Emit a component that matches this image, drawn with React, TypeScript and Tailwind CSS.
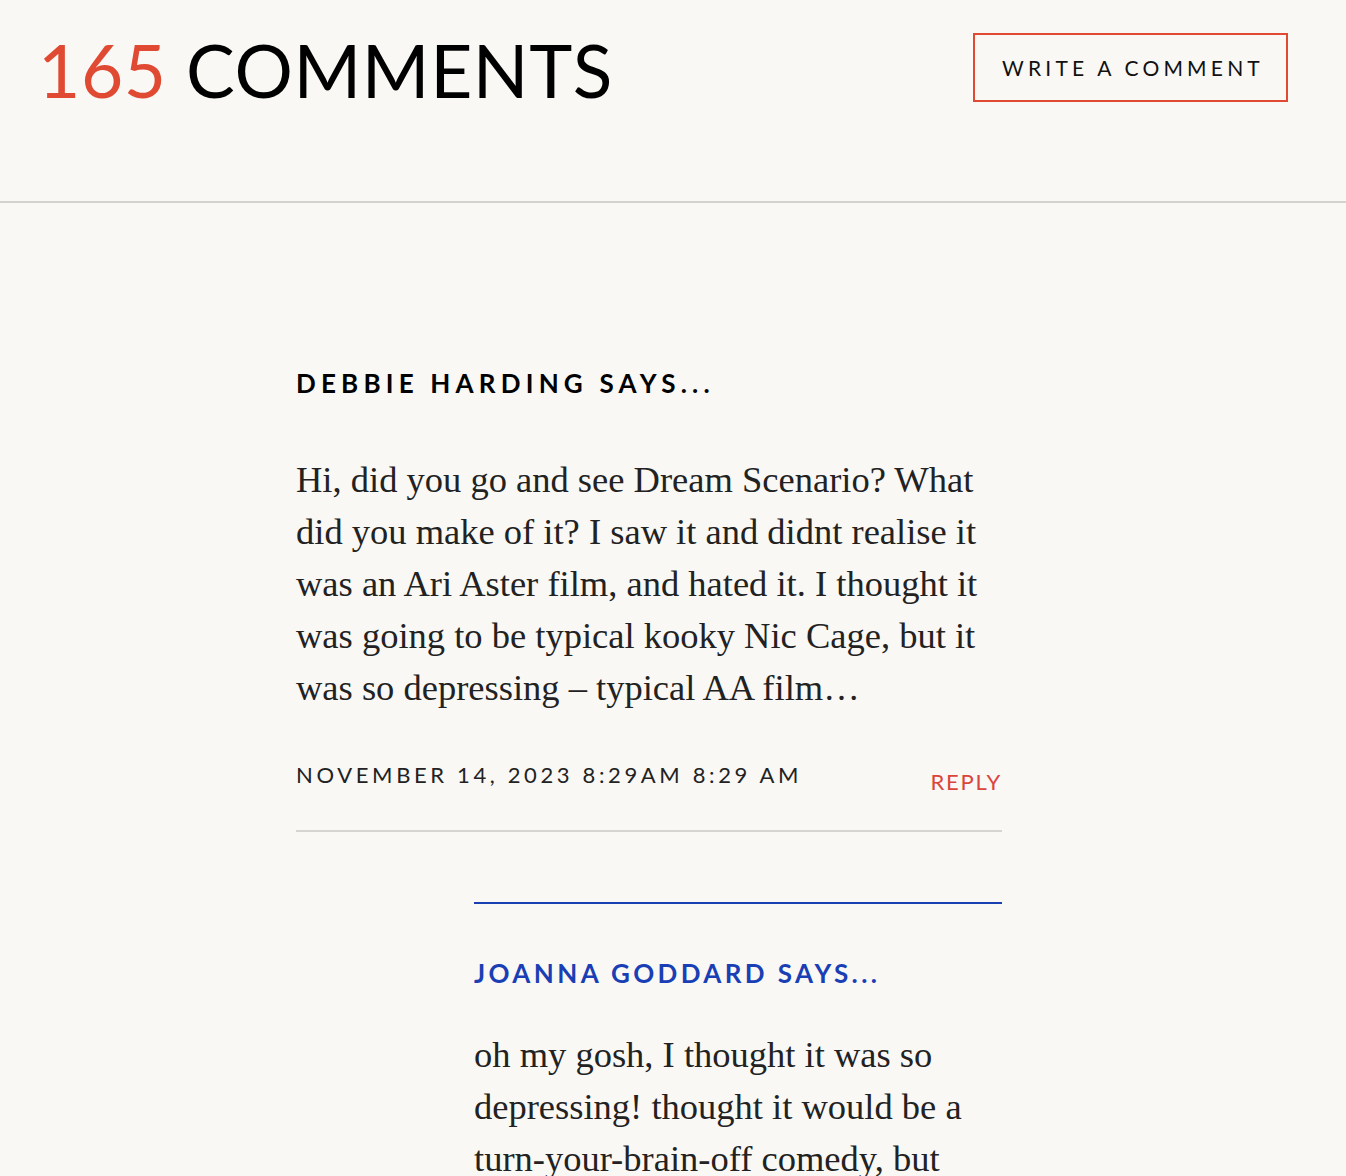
import React from "react";

export default function App() {
  return (
    <div className="min-h-screen bg-[#f9f8f5] text-[#1a1a1a]">
      <header className="h-[203px] border-b-2 border-[#d3d2cf] flex justify-between items-start">
        <h1 className="ml-[38px] mt-[28px] text-[73px] leading-[84px] font-normal tracking-[0.008em] text-black font-['Lato','Noto_Sans',sans-serif]">
          <span className="text-[#e04a33]">165</span> COMMENTS
        </h1>
        <button className="mt-[33px] mr-[58px] w-[315px] h-[69px] border-2 border-[#e04a33] text-[21px] tracking-[0.2em] text-[#111] flex items-center justify-center pl-[5px] font-['Lato','Noto_Sans',sans-serif]">
          WRITE A COMMENT
        </button>
      </header>

      <main className="ml-[296px] w-[706px] pt-[164px]">
        <article>
          <h3 className="text-[26px] leading-[32px] font-bold tracking-[0.2em] text-black font-['Lato','Noto_Sans',sans-serif]">
            DEBBIE HARDING SAYS...
          </h3>
          <p className="mt-[55px] text-[36.5px] leading-[52px] text-[#222] font-['Liberation_Serif','Times_New_Roman',serif]">
            Hi, did you go and see Dream Scenario? What
            <br />
            did you make of it? I saw it and didnt realise it
            <br />
            was an Ari Aster film, and hated it. I thought it
            <br />
            was going to be typical kooky Nic Cage, but it
            <br />
            was so depressing – typical AA film…
          </p>
          <div className="mt-[47px] flex justify-between items-start pb-[34px] border-b-2 border-[#d6d5d2]">
            <span className="text-[22px] leading-[28px] tracking-[0.165em] text-[#222] font-['Lato','Noto_Sans',sans-serif]">
              NOVEMBER 14, 2023 8:29AM 8:29 AM
            </span>
            <a className="mt-[7px] text-[22px] leading-[28px] tracking-[0.08em] text-[#d9453c] font-['Lato','Noto_Sans',sans-serif]">
              REPLY
            </a>
          </div>
        </article>

        <article className="ml-[178px] mt-[70px] border-t-2 border-[#1a3fb0] pt-[53px]">
          <h3 className="text-[26px] leading-[32px] font-bold tracking-[0.13em] text-[#1a3fb5] font-['Lato','Noto_Sans',sans-serif]">
            JOANNA GODDARD SAYS...
          </h3>
          <p className="mt-[40px] text-[36.5px] leading-[52px] text-[#222] font-['Liberation_Serif','Times_New_Roman',serif]">
            oh my gosh, I thought it was so
            <br />
            depressing! thought it would be a
            <br />
            turn-your-brain-off comedy, but
          </p>
        </article>
      </main>
    </div>
  );
}
